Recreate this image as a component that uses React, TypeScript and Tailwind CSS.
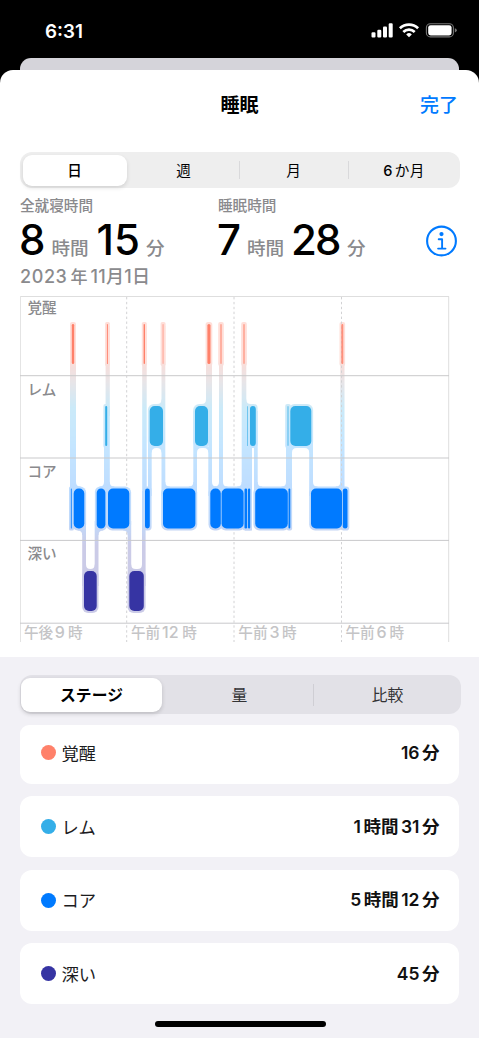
const stageColor: any = {
  awake: "#ff816a",
  rem: "#34aee8",
  core: "#007aff",
  deep: "#3634a3",
};

const stageTop: any = { awake: 28, rem: 110, core: 192.5, deep: 275 };

// [stage, start, end, opacity]
const bars: any[] = [
  ["awake", 71.8, 74.2, 1],
  ["awake", 106.9, 108, 0.85],
  ["awake", 143.6, 145, 1],
  ["awake", 162.4, 163.8, 0.45],
  ["awake", 207.4, 210.5, 1],
  ["awake", 220, 222, 0.5],
  ["awake", 243, 245, 0.5],
  ["awake", 341.3, 343.3, 0.85],
  ["rem", 105.2, 107.2, 1],
  ["rem", 149.7, 163, 1],
  ["rem", 195, 208, 1],
  ["rem", 247, 248, 0.6],
  ["rem", 250, 255.8, 1],
  ["rem", 287, 289, 0.4],
  ["rem", 290.3, 311.3, 1],
  ["core", 70.8, 72, 0.7],
  ["core", 73.7, 84.3, 1],
  ["core", 96.7, 105.4, 1],
  ["core", 108, 129.3, 1],
  ["core", 145, 149.8, 1],
  ["core", 163, 195.4, 1],
  ["core", 210.3, 220.8, 1],
  ["core", 221.6, 243.6, 1],
  ["core", 244.5, 247.2, 1],
  ["core", 248, 250.2, 1],
  ["core", 255.2, 287.8, 1],
  ["core", 288.5, 290.3, 1],
  ["core", 311, 342, 1],
  ["core", 342.8, 347.5, 1],
  ["deep", 84, 96.7, 1],
  ["deep", 129.3, 143.8, 1],
];

// [left, right, top, bottom]
const links = [
  [70, 76, 30, 200],
  [105.6, 109.8, 30, 120],
  [104, 109.8, 110, 200],
  [142.2, 146.7, 30, 200],
  [148, 151.7, 115, 200],
  [161.5, 165.3, 30, 200],
  [193.3, 197, 115, 200],
  [206, 212, 30, 115],
  [208.3, 212, 110, 200],
  [219, 223, 30, 200],
  [241.7, 246.3, 30, 200],
  [245, 252, 110, 234.5],
  [254, 257.7, 115, 200],
  [286, 292, 110, 200],
  [309.2, 313, 115, 200],
  [340.3, 344.5, 30, 200],
  [82.2, 86, 225, 290],
  [94.7, 98.5, 225, 290],
  [127.7, 131.2, 225, 290],
  [142, 145.6, 195, 290],
];

// [x, y, x direction, y direction] of every rounded inner corner
const corners = [
  [76, 190.5, 1, -1],
  [104, 190.5, -1, -1],
  [109.8, 190.5, 1, -1],
  [165.3, 190.5, 1, -1],
  [193.3, 190.5, -1, -1],
  [212, 190.5, 1, -1],
  [219, 190.5, -1, -1],
  [223, 190.5, 1, -1],
  [241.7, 190.5, -1, -1],
  [257.7, 190.5, 1, -1],
  [286, 190.5, -1, -1],
  [313, 190.5, 1, -1],
  [340.3, 190.5, -1, -1],
  [161.5, 108, -1, -1],
  [206, 108, -1, -1],
  [246.3, 108, 1, -1],
  [151.7, 152, 1, 1],
  [161.5, 152, -1, 1],
  [197, 152, 1, 1],
  [208.3, 152, -1, 1],
  [292, 152, 1, 1],
  [309.2, 152, -1, 1],
  [82.2, 234.5, -1, 1],
  [98.5, 234.5, 1, 1],
  [127.7, 234.5, -1, 1],
  [86, 273, 1, -1],
  [94.7, 273, -1, -1],
  [131.2, 273, 1, -1],
  [142, 273, -1, -1],
];

const rowLabels = ["覚醒", "レム", "コア", "深い"];

const timeLabels = [
  { x: 24, day: "午後", hour: "9", hourX: 54.8, endX: 68 },
  { x: 131, day: "午前", hour: "12", hourX: 162, endX: 182.3 },
  { x: 238.3, day: "午前", hour: "3", hourX: 269.5, endX: 282 },
  { x: 345.5, day: "午前", hour: "6", hourX: 376.5, endX: 389.5 },
];

const stages = [
  { name: "覚醒", dot: "bg-[#ff816a]", time: ["16", "分"] },
  { name: "レム", dot: "bg-[#34aee8]", time: ["1", "時間", "31", "分"] },
  { name: "コア", dot: "bg-[#007aff]", time: ["5", "時間", "12", "分"] },
  { name: "深い", dot: "bg-[#3634a3]", time: ["45", "分"] },
];

const StatusBar = () => {
  return (
    <div className="h-[58px] shrink-0 flex justify-between pl-[45px] pr-[22px] pt-[19px] text-white">
      <p className="text-[18.8px] leading-[26px] font-semibold">6:31</p>
      <svg width="86" height="16" viewBox="0 0 86 16" className="mt-[3px]" fill="white">
        <rect x="0.5" y="10.3" width="4" height="5.2" rx="1.1" />
        <rect x="6.3" y="7.8" width="4" height="7.7" rx="1.1" />
        <rect x="12" y="4.6" width="4" height="10.9" rx="1.1" />
        <rect x="17.7" y="1.3" width="4" height="14.2" rx="1.1" />
        <g fill="none" stroke="white" strokeWidth="2.7">
          <path d="M28.9 6.2a13.3 13.3 0 0 1 18.2 0" />
          <path d="M32.3 9.9a8.3 8.3 0 0 1 11.4 0" />
        </g>
        <path d="M38 15.3l-2.8-2.9a4 4 0 0 1 5.6 0z" />
        <rect x="55.4" y="1.7" width="27" height="13.2" rx="4" fill="none" stroke="#777" strokeWidth="1.1" />
        <rect x="57.2" y="3.2" width="23.4" height="10.2" rx="2.4" />
        <path d="M83.8 6.2q2 .6 2 2.1t-2 2.1z" fill="#777" />
      </svg>
    </div>
  );
};

const SleepChart = () => {
  return (
    <svg
      width="430"
      height="347"
      viewBox="20 0 430 347"
      className="block ml-5"
      fontFamily="Inter, 'Noto Sans CJK JP', sans-serif"
    >
      <defs>
        <linearGradient id="stage" gradientUnits="userSpaceOnUse" x1="0" y1="0" x2="0" y2="320">
          <stop offset="0.2" stopColor="#ff816a" />
          <stop offset="0.225" stopColor="#d3837c" />
          <stop offset="0.27" stopColor="#a59aa6" />
          <stop offset="0.35" stopColor="#34aee8" />
          <stop offset="0.46" stopColor="#199dff" />
          <stop offset="0.6" stopColor="#007aff" />
          <stop offset="0.71" stopColor="#0a6df0" />
          <stop offset="0.78" stopColor="#3634a3" />
        </linearGradient>
      </defs>
      <g fill="url(#stage)" opacity="0.25">
        {bars.map(([stage, start, end]: any, index: any) => (
          <rect
            key={index}
            x={start - 1.8}
            y={stageTop[stage] - 2}
            width={end - start + 3.6}
            height="44"
            rx={Math.min((end - start) / 2 + 1, 6)}
          />
        ))}
        {links.map(([left, right, top, bottom]: any, index: any) => (
          <rect key={index} x={left} y={top} width={right - left} height={bottom - top} />
        ))}
        {corners.map(([x, y, dx, dy]: any, index: any) => (
          <path
            key={index}
            d={`M${x - dx} ${y - dy}V${y + dy * 4.5}H${x}Q${x} ${y} ${x + dx * 4.5} ${y}V${y - dy}Z`}
          />
        ))}
      </g>
      <g fill="none" stroke="#c9c9cb">
        <path d="M20.3 0.5H449" stroke="#dedede" />
        <path d="M20.3 0.5V346M448.7 0.5V346" stroke="#dedede" />
        <path d="M20 79.7H449M20 162H449M20 244.4H449M20 327.2H449" />
        <path d="M126.7 1V346M234 1V346M341.5 1V346" stroke="#d2d2d4" strokeDasharray="2.4 2.5" />
      </g>
      {bars.map(([stage, start, end, opacity]: any, index: any) => (
        <rect
          key={index}
          x={start}
          y={stageTop[stage]}
          width={end - start}
          height="40"
          rx={Math.min((end - start) / 2, 5)}
          fill={stageColor[stage]}
          opacity={opacity}
        />
      ))}
      <g fontSize="14.6" fontWeight="500" fill="#8a8a8d">
        {rowLabels.map((label: any, index: any) => (
          <text key={label} x="27.5" y={16.5 + index * 82.3}>
            {label}
          </text>
        ))}
      </g>
      <g fontSize="14.6" fontWeight="500" fill="#c4c4c6">
        {timeLabels.map((item: any) => (
          <text key={item.x} y="342">
            <tspan x={item.x}>{item.day}</tspan>
            <tspan x={item.hourX} fontSize="16">
              {item.hour}
            </tspan>
            <tspan x={item.endX}>時</tspan>
          </text>
        ))}
      </g>
    </svg>
  );
};

const Duration = (props: any) => {
  const { label, hours, minutes, className, hoursClass, minutesClass } = props;
  return (
    <div className={className}>
      <p className="text-[14.6px] leading-5 font-medium text-[#8a8a8d]">{label}</p>
      <div className="flex items-baseline h-[49px] leading-[47px] text-[42px] font-medium text-black">
        <span className={hoursClass}>{hours}</span>
        <span className="w-[45px] text-[18.6px] text-[#8a8a8d]">時間</span>
        <span className={minutesClass}>{minutes}</span>
        <span className="text-[18.6px] text-[#8a8a8d]">分</span>
      </div>
    </div>
  );
};

const App = () => {
  return (
    <div className="w-[480px] h-[1038px] bg-white pr-px overflow-hidden font-[Inter,'Noto_Sans_CJK_JP',sans-serif]">
      <div className="h-full bg-black flex flex-col">
        <StatusBar />
        <div className="h-3 shrink-0 mx-5 rounded-t-[11px] bg-[#d5d4da]"></div>
        <div className="flex-1 flex flex-col rounded-t-[13px] bg-white overflow-hidden">
          <div className="h-[82px] shrink-0 grid grid-cols-3 pt-[22px] px-[21px] text-[19px] leading-7">
            <h1 className="col-start-2 text-center font-bold">睡眠</h1>
            <button className="text-right font-medium text-[#007aff] -mt-7 pt-7 h-14">完了</button>
          </div>

          <div className="h-9 shrink-0 ml-5 w-[440px] p-[2.5px] rounded-xl bg-[#eeeeee] flex items-center text-[14.6px] font-medium">
            <div className="w-[104px] h-[31px] pt-[3px] rounded-[9px] bg-white shadow-[0_2px_4px_rgba(0,0,0,0.12)] flex items-center justify-center">
              日
            </div>
            <div className="w-[112px] pl-0.5 pt-[3px] text-center font-normal">週</div>
            <div className="w-px h-[18px] bg-[#d9d9db]"></div>
            <div className="w-[108px] pt-[3px] text-center font-normal">月</div>
            <div className="w-px h-[18px] bg-[#d9d9db]"></div>
            <div className="flex-1 pt-[3px] pl-0.5 text-center tracking-[0.3px]">
              6<span className="ml-0.5 font-normal">か月</span>
            </div>
          </div>

          <div className="h-[78px] shrink-0 flex pl-5 pt-[8px]">
            <Duration
              className="w-[198px]"
              label="全就寝時間"
              hours="8"
              minutes="15"
              hoursClass="w-[32.5px] -ml-px"
              minutesClass="w-[49.5px]"
            />
            <Duration
              className="w-[208px]"
              label="睡眠時間"
              hours="7"
              minutes="28"
              hoursClass="w-[30px] -ml-px"
              minutesClass="w-[55px] -ml-px mr-px tracking-[-2px]"
            />
            <svg width="32" height="32" viewBox="0 0 32 32" className="mt-[29px]" fill="none" stroke="#007aff">
              <circle cx="15.5" cy="16" r="14.4" strokeWidth="2.1" />
              <circle cx="15.5" cy="9.1" r="2.1" fill="#007aff" stroke="none" />
              <path d="M12.7 14.3h3.4v9.2M12.1 23.6h7.4" strokeWidth="1.9" strokeLinecap="round" strokeLinejoin="round" />
            </svg>
          </div>
          <p className="h-[30px] shrink-0 pl-5 leading-[22px] text-[18px] font-medium text-[#8a8a8d] flex gap-[3px]">
            <span className="tracking-[0.6px]">2023</span>
            <span className="text-[17px]">年</span>
            <span className="tracking-[0.3px]">11月1日</span>
          </p>

          <SleepChart />

          <div className="flex-1 mt-[14px] pt-[18px] bg-[#f2f1f6] flex flex-col">
            <div className="h-[39px] shrink-0 ml-5 w-[441px] pl-px rounded-xl bg-[#e2e1e7] flex items-center text-[15.8px]">
              <div className="w-[141px] h-[34px] pt-0.5 rounded-[9px] bg-white shadow-[0_2px_4px_rgba(0,0,0,0.16)] flex items-center justify-center font-bold">
                ステージ
              </div>
              <div className="w-[151px] pl-1 pt-0.5 text-center text-[#333336]">量</div>
              <div className="w-px h-[22px] bg-[#cfced4]"></div>
              <div className="flex-1 pt-0.5 text-center text-[#333336]">比較</div>
            </div>
            <div className="mt-[11px] px-5 flex flex-col gap-[12.5px]">
              {stages.map((item: any, index: any) => {
                return (
                  <div
                    key={index}
                    className="h-[61px] first:h-[58.5px] first:pb-[3px] rounded-xl first:rounded-t-[9px] bg-white pl-[20.5px] pr-[19.5px] flex items-center"
                  >
                    <span className={`w-[15px] h-[15px] rounded-full ${item.dot}`}></span>
                    <p className="ml-1.5 pt-0.5 text-[17.3px] text-[#1c1c1e]">{item.name}</p>
                    <p className="ml-auto pt-px flex gap-[2.5px] text-[17.5px] font-semibold text-[#111]">
                      {item.time.map((part: any, i: any) => (
                        <span key={i}>{part}</span>
                      ))}
                    </p>
                  </div>
                );
              })}
            </div>
            <div className="mt-[16.5px] ml-[155px] w-[171px] h-[6.5px] rounded-full bg-black"></div>
          </div>
        </div>
      </div>
    </div>
  );
};

export default App;
